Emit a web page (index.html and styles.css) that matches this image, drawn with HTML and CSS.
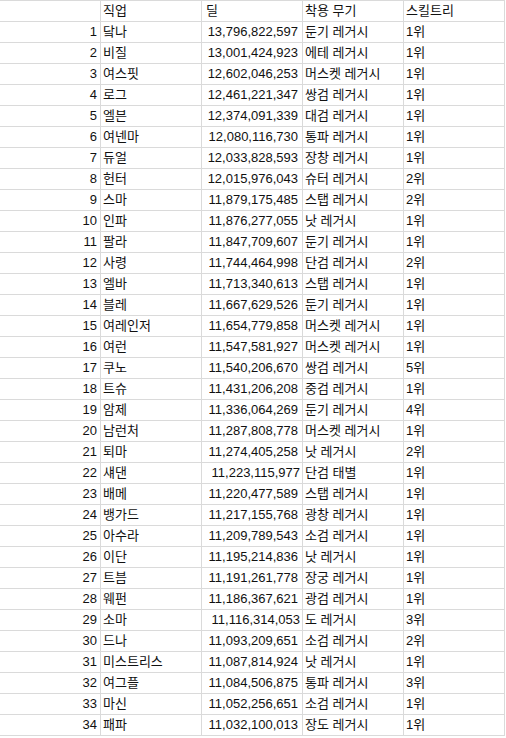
FILE: index.html
```html
<!DOCTYPE html>
<html lang="ko">
<head>
<meta charset="utf-8">
<link rel="stylesheet" href="styles.css">
</head>
<body>
<div class="sheet">
  <div class="c idx"></div><div class="c txt">직업</div><div class="c txt hd">딜</div><div class="c txt">착용 무기</div><div class="c txt">스킬트리</div>
  <div class="c idx">1</div><div class="c txt">닼나</div><div class="c num">13,796,822,597</div><div class="c txt">둔기 레거시</div><div class="c txt">1위</div>
  <div class="c idx">2</div><div class="c txt">비질</div><div class="c num">13,001,424,923</div><div class="c txt">에테 레거시</div><div class="c txt">1위</div>
  <div class="c idx">3</div><div class="c txt">여스핏</div><div class="c num">12,602,046,253</div><div class="c txt">머스켓 레거시</div><div class="c txt">1위</div>
  <div class="c idx">4</div><div class="c txt">로그</div><div class="c num">12,461,221,347</div><div class="c txt">쌍검 레거시</div><div class="c txt">1위</div>
  <div class="c idx">5</div><div class="c txt">엘븐</div><div class="c num">12,374,091,339</div><div class="c txt">대검 레거시</div><div class="c txt">1위</div>
  <div class="c idx">6</div><div class="c txt">여넨마</div><div class="c num">12,080,116,730</div><div class="c txt">통파 레거시</div><div class="c txt">1위</div>
  <div class="c idx">7</div><div class="c txt">듀얼</div><div class="c num">12,033,828,593</div><div class="c txt">장창 레거시</div><div class="c txt">1위</div>
  <div class="c idx">8</div><div class="c txt">헌터</div><div class="c num">12,015,976,043</div><div class="c txt">슈터 레거시</div><div class="c txt">2위</div>
  <div class="c idx">9</div><div class="c txt">스마</div><div class="c num">11,879,175,485</div><div class="c txt">스탭 레거시</div><div class="c txt">2위</div>
  <div class="c idx">10</div><div class="c txt">인파</div><div class="c num">11,876,277,055</div><div class="c txt">낫 레거시</div><div class="c txt">1위</div>
  <div class="c idx">11</div><div class="c txt">팔라</div><div class="c num">11,847,709,607</div><div class="c txt">둔기 레거시</div><div class="c txt">1위</div>
  <div class="c idx">12</div><div class="c txt">사령</div><div class="c num">11,744,464,998</div><div class="c txt">단검 레거시</div><div class="c txt">2위</div>
  <div class="c idx">13</div><div class="c txt">엘바</div><div class="c num">11,713,340,613</div><div class="c txt">스탭 레거시</div><div class="c txt">1위</div>
  <div class="c idx">14</div><div class="c txt">블레</div><div class="c num">11,667,629,526</div><div class="c txt">둔기 레거시</div><div class="c txt">1위</div>
  <div class="c idx">15</div><div class="c txt">여레인저</div><div class="c num">11,654,779,858</div><div class="c txt">머스켓 레거시</div><div class="c txt">1위</div>
  <div class="c idx">16</div><div class="c txt">여런</div><div class="c num">11,547,581,927</div><div class="c txt">머스켓 레거시</div><div class="c txt">1위</div>
  <div class="c idx">17</div><div class="c txt">쿠노</div><div class="c num">11,540,206,670</div><div class="c txt">쌍검 레거시</div><div class="c txt">5위</div>
  <div class="c idx">18</div><div class="c txt">트슈</div><div class="c num">11,431,206,208</div><div class="c txt">중검 레거시</div><div class="c txt">1위</div>
  <div class="c idx">19</div><div class="c txt">암제</div><div class="c num">11,336,064,269</div><div class="c txt">둔기 레거시</div><div class="c txt">4위</div>
  <div class="c idx">20</div><div class="c txt">남런처</div><div class="c num">11,287,808,778</div><div class="c txt">머스켓 레거시</div><div class="c txt">1위</div>
  <div class="c idx">21</div><div class="c txt">퇴마</div><div class="c num">11,274,405,258</div><div class="c txt">낫 레거시</div><div class="c txt">2위</div>
  <div class="c idx">22</div><div class="c txt">섀댄</div><div class="c num sh">11,223,115,977</div><div class="c txt">단검 태별</div><div class="c txt">1위</div>
  <div class="c idx">23</div><div class="c txt">배메</div><div class="c num">11,220,477,589</div><div class="c txt">스탭 레거시</div><div class="c txt">1위</div>
  <div class="c idx">24</div><div class="c txt">뱅가드</div><div class="c num">11,217,155,768</div><div class="c txt">광창 레거시</div><div class="c txt">1위</div>
  <div class="c idx">25</div><div class="c txt">아수라</div><div class="c num">11,209,789,543</div><div class="c txt">소검 레거시</div><div class="c txt">1위</div>
  <div class="c idx">26</div><div class="c txt">이단</div><div class="c num">11,195,214,836</div><div class="c txt">낫 레거시</div><div class="c txt">1위</div>
  <div class="c idx">27</div><div class="c txt">트븜</div><div class="c num">11,191,261,778</div><div class="c txt">장궁 레거시</div><div class="c txt">1위</div>
  <div class="c idx">28</div><div class="c txt">웨펀</div><div class="c num">11,186,367,621</div><div class="c txt">광검 레거시</div><div class="c txt">1위</div>
  <div class="c idx">29</div><div class="c txt">소마</div><div class="c num sh">11,116,314,053</div><div class="c txt">도 레거시</div><div class="c txt">3위</div>
  <div class="c idx">30</div><div class="c txt">드나</div><div class="c num">11,093,209,651</div><div class="c txt">소검 레거시</div><div class="c txt">2위</div>
  <div class="c idx">31</div><div class="c txt">미스트리스</div><div class="c num">11,087,814,924</div><div class="c txt">낫 레거시</div><div class="c txt">1위</div>
  <div class="c idx">32</div><div class="c txt">여그플</div><div class="c num">11,084,506,875</div><div class="c txt">통파 레거시</div><div class="c txt">3위</div>
  <div class="c idx">33</div><div class="c txt">마신</div><div class="c num">11,052,256,651</div><div class="c txt">소검 레거시</div><div class="c txt">1위</div>
  <div class="c idx">34</div><div class="c txt">패파</div><div class="c num">11,032,100,013</div><div class="c txt">장도 레거시</div><div class="c txt">1위</div>
</div>
</body>
</html>
```

FILE: styles.css
```css
html, body {
  margin: 0;
  padding: 0;
  background: #ffffff;
}

.sheet {
  display: grid;
  grid-template-columns: 101px 101px 101px 101px 101px;
  grid-auto-rows: 21px;
  border-top: 1px solid #dadada;
  width: 505px;
  font-family: "Liberation Sans", Arial, "Noto Sans CJK KR", sans-serif;
  font-size: 13px;
  color: #111111;
}

.c {
  box-sizing: border-box;
  height: 21px;
  border-right: 1px solid #dadada;
  border-bottom: 1px solid #dadada;
  line-height: 20px;
  white-space: nowrap;
  overflow: hidden;
}

.idx {
  text-align: right;
  padding-right: 3px;
}

.txt {
  text-align: left;
  padding-left: 2px;
}

.hd {
  padding-left: 4px;
}

.num {
  text-align: right;
  padding-right: 4px;
}

.num.sh {
  padding-right: 2px;
}
```
